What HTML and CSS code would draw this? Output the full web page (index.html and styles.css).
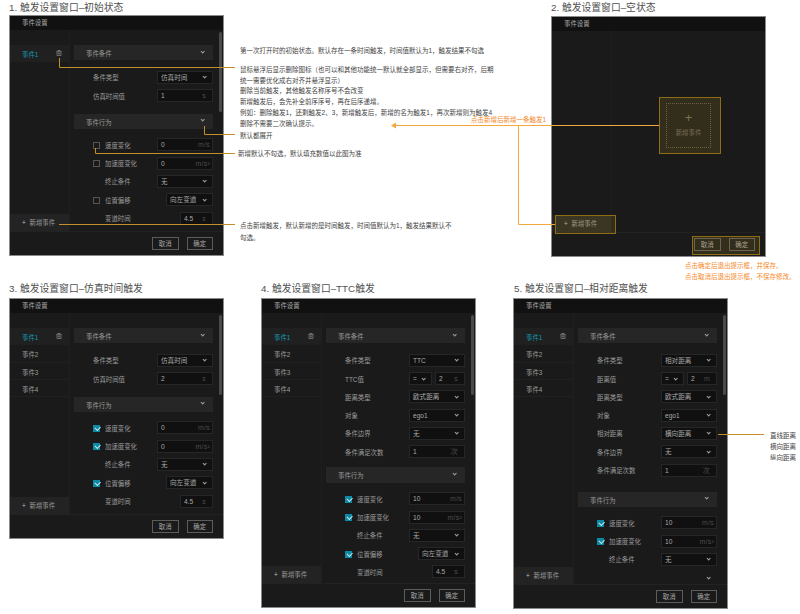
FILE: index.html
```html
<!DOCTYPE html>
<html lang="zh-CN">

<head>
    <meta charset="utf-8">
    <title>触发设置窗口</title>
    <link rel="stylesheet" href="styles.css">
</head>

<body>
    <h2 class="heading heading-1">1. 触发设置窗口–初始状态</h2>
    <h2 class="heading heading-2">2. 触发设置窗口–空状态</h2>
    <h2 class="heading heading-3">3. 触发设置窗口–仿真时间触发</h2>
    <h2 class="heading heading-4">4. 触发设置窗口–TTC触发</h2>
    <h2 class="heading heading-5">5. 触发设置窗口–相对距离触发</h2>

    <!-- 1 初始状态 -->
    <div class="win win-1">
        <div class="win-title">事件设置</div>
        <div class="win-body">
            <div class="side">
                <div class="item active">事件1
                    <svg class="trash" viewBox="0 0 6 6"><path d="M.5 1.3h5M2 1.3V.5h2v.8M1 1.3v4.2h4V1.3M2.4 2.4v2M3.6 2.4v2"/></svg>
                </div>
                <div class="add"><span class="plus">+</span>新增事件</div>
            </div>
            <div class="content">
                <div class="section">事件条件<i class="chev"></i></div>
                <div class="rows">
                    <div class="row"><span class="label">条件类型</span><div class="field">仿真时间<i class="chev"></i></div></div>
                    <div class="row"><span class="label">仿真时间值</span><div class="field">1<span class="unit unit-s">s</span></div></div>
                </div>
                <div class="section section-next">事件行为<i class="chev"></i></div>
                <div class="rows rows-action">
                    <div class="row"><span class="label"><i class="check"></i>速度变化</span><div class="field">0<span class="unit">m/s</span></div></div>
                    <div class="row"><span class="label"><i class="check"></i>加速度变化</span><div class="field">0<span class="unit">m/s²</span></div></div>
                    <div class="row"><span class="label indent">终止条件</span><div class="field">无<i class="chev"></i></div></div>
                    <div class="row"><span class="label"><i class="check"></i>位置偏移</span><div class="field field-mid">向左变道<i class="chev"></i></div></div>
                    <div class="row"><span class="label indent">变道时间</span><div class="field field-small">4.5<span class="unit unit-s">s</span></div></div>
                </div>
            </div>
            <div class="scroll"></div>
        </div>
        <div class="win-foot"><div class="btn">取消</div><div class="btn">确定</div></div>
    </div>

    <!-- 2 空状态 -->
    <div class="win win-2">
        <div class="win-title">事件设置</div>
        <div class="win-body">
            <div class="side side-empty">
                <div class="add"><span class="plus">+</span>新增事件</div>
            </div>
            <div class="content content-empty">
                <div class="empty-box"><span class="empty-plus">+</span>新增事件</div>
            </div>
        </div>
        <div class="win-foot"><div class="btn">取消</div><div class="btn">确定</div></div>
    </div>

    <!-- 3 仿真时间触发 -->
    <div class="win win-3">
        <div class="win-title">事件设置</div>
        <div class="win-body">
            <div class="side">
                <div class="item active">事件1
                    <svg class="trash" viewBox="0 0 6 6"><path d="M.5 1.3h5M2 1.3V.5h2v.8M1 1.3v4.2h4V1.3M2.4 2.4v2M3.6 2.4v2"/></svg>
                </div>
                <div class="item">事件2</div>
                <div class="item">事件3</div>
                <div class="item">事件4</div>
                <div class="add"><span class="plus">+</span>新增事件</div>
            </div>
            <div class="content">
                <div class="section">事件条件<i class="chev"></i></div>
                <div class="rows">
                    <div class="row"><span class="label">条件类型</span><div class="field">仿真时间<i class="chev"></i></div></div>
                    <div class="row"><span class="label">仿真时间值</span><div class="field">2<span class="unit unit-s">s</span></div></div>
                </div>
                <div class="section section-next">事件行为<i class="chev"></i></div>
                <div class="rows rows-action">
                    <div class="row"><span class="label"><i class="check on"></i>速度变化</span><div class="field">0<span class="unit">m/s</span></div></div>
                    <div class="row"><span class="label"><i class="check on"></i>加速度变化</span><div class="field">0<span class="unit">m/s²</span></div></div>
                    <div class="row"><span class="label indent">终止条件</span><div class="field">无<i class="chev"></i></div></div>
                    <div class="row"><span class="label"><i class="check on"></i>位置偏移</span><div class="field field-mid">向左变道<i class="chev"></i></div></div>
                    <div class="row"><span class="label indent">变道时间</span><div class="field field-small">4.5<span class="unit unit-s">s</span></div></div>
                </div>
            </div>
            <div class="scroll"></div>
        </div>
        <div class="win-foot"><div class="btn">取消</div><div class="btn">确定</div></div>
    </div>

    <!-- 4 TTC触发 -->
    <div class="win win-4">
        <div class="win-title">事件设置</div>
        <div class="win-body">
            <div class="side">
                <div class="item active">事件1
                    <svg class="trash" viewBox="0 0 6 6"><path d="M.5 1.3h5M2 1.3V.5h2v.8M1 1.3v4.2h4V1.3M2.4 2.4v2M3.6 2.4v2"/></svg>
                </div>
                <div class="item">事件2</div>
                <div class="item">事件3</div>
                <div class="item">事件4</div>
                <div class="add"><span class="plus">+</span>新增事件</div>
            </div>
            <div class="content">
                <div class="section">事件条件<i class="chev"></i></div>
                <div class="rows">
                    <div class="row"><span class="label">条件类型</span><div class="field">TTC<i class="chev"></i></div></div>
                    <div class="row"><span class="label">TTC值</span>
                        <div class="pair"><div class="field field-op">=<i class="chev"></i></div><div class="field field-val">2<span class="unit unit-s">s</span></div></div>
                    </div>
                    <div class="row"><span class="label">距离类型</span><div class="field">欧式距离<i class="chev"></i></div></div>
                    <div class="row"><span class="label">对象</span><div class="field">ego1<i class="chev"></i></div></div>
                    <div class="row"><span class="label">条件边界</span><div class="field">无<i class="chev"></i></div></div>
                    <div class="row"><span class="label">条件满足次数</span><div class="field">1<span class="unit unit-s">次</span></div></div>
                </div>
                <div class="section section-next section-tight">事件行为<i class="chev"></i></div>
                <div class="rows rows-action">
                    <div class="row"><span class="label"><i class="check on"></i>速度变化</span><div class="field">10<span class="unit">m/s</span></div></div>
                    <div class="row"><span class="label"><i class="check on"></i>加速度变化</span><div class="field">10<span class="unit">m/s²</span></div></div>
                    <div class="row"><span class="label indent">终止条件</span><div class="field">无<i class="chev"></i></div></div>
                    <div class="row"><span class="label"><i class="check on"></i>位置偏移</span><div class="field field-mid">向左变道<i class="chev"></i></div></div>
                    <div class="row"><span class="label indent">变道时间</span><div class="field field-small">4.5<span class="unit unit-s">s</span></div></div>
                </div>
            </div>
            <div class="scroll"></div>
        </div>
        <div class="win-foot"><div class="btn">取消</div><div class="btn">确定</div></div>
    </div>

    <!-- 5 相对距离触发 -->
    <div class="win win-5">
        <div class="win-title">事件设置</div>
        <div class="win-body">
            <div class="side">
                <div class="item active">事件1
                    <svg class="trash" viewBox="0 0 6 6"><path d="M.5 1.3h5M2 1.3V.5h2v.8M1 1.3v4.2h4V1.3M2.4 2.4v2M3.6 2.4v2"/></svg>
                </div>
                <div class="item">事件2</div>
                <div class="item">事件3</div>
                <div class="item">事件4</div>
                <div class="add"><span class="plus">+</span>新增事件</div>
            </div>
            <div class="content">
                <div class="section">事件条件<i class="chev"></i></div>
                <div class="rows">
                    <div class="row"><span class="label">条件类型</span><div class="field">相对距离<i class="chev"></i></div></div>
                    <div class="row"><span class="label">距离值</span>
                        <div class="pair"><div class="field field-op">=<i class="chev"></i></div><div class="field field-val">2<span class="unit unit-s">m</span></div></div>
                    </div>
                    <div class="row"><span class="label">距离类型</span><div class="field">欧式距离<i class="chev"></i></div></div>
                    <div class="row"><span class="label">对象</span><div class="field">ego1<i class="chev"></i></div></div>
                    <div class="row"><span class="label">相对距离</span><div class="field">横向距离<i class="chev"></i></div></div>
                    <div class="row"><span class="label">条件边界</span><div class="field">无<i class="chev"></i></div></div>
                    <div class="row"><span class="label">条件满足次数</span><div class="field">1<span class="unit unit-s">次</span></div></div>
                </div>
                <div class="section section-next section-wide">事件行为<i class="chev"></i></div>
                <div class="rows rows-action">
                    <div class="row"><span class="label"><i class="check on"></i>速度变化</span><div class="field">10<span class="unit">m/s</span></div></div>
                    <div class="row"><span class="label"><i class="check on"></i>加速度变化</span><div class="field">10<span class="unit">m/s²</span></div></div>
                    <div class="row"><span class="label indent">终止条件</span><div class="field">无<i class="chev"></i></div></div>
                    <div class="row"><span class="label"></span><div class="field field-bare"><i class="chev"></i></div></div>
                </div>
            </div>
            <div class="scroll"></div>
        </div>
        <div class="win-foot"><div class="btn">取消</div><div class="btn">确定</div></div>
    </div>

    <!-- 窗口2的高亮框 -->
    <div class="hl hl-empty"></div>
    <div class="hl hl-add"></div>
    <div class="hl hl-foot"></div>

    <!-- 引线 -->
    <svg class="lines" viewBox="0 0 800 614">
        <path class="lead" d="M59.5 58V67.5H235M204.5 126V134.5H235M95.5 148V153.5H235M59 224.5H235M718 434.5H764"/>
        <path class="lead-strong" d="M393 125.5H659M518.5 125.5V224.5H555"/>
        <path class="arrow" d="M391 125.5L396 122.5V128.5Z"/>
    </svg>

    <!-- 说明文字 -->
    <p class="note note-a">第一次打开时的初始状态。默认存在一条时间触发，时间值默认为1，触发结果不勾选</p>
    <div class="note note-b">
        <p>鼠标悬浮后显示删除图标（也可以和其他功能统一默认就全部显示，但需要右对齐，后期</p>
        <p>统一需要优化成右对齐并悬浮显示）</p>
        <p>删除当前触发，其他触发名称序号不会改变</p>
        <p>新增触发后，会先补全前序序号，再在后序递增。</p>
        <p>例如：删除触发1，还剩触发2、3，新增触发后，新增的名为触发1，再次新增则为触发4</p>
        <p>删除不需要二次确认提示。</p>
    </div>
    <p class="note note-c">默认都展开</p>
    <p class="note note-d">新增默认不勾选，默认填充数值以此图为准</p>
    <div class="note note-e">
        <p>点击新增触发，默认新增的是时间触发，时间值默认为1，触发结果默认不</p>
        <p>勾选。</p>
    </div>
    <p class="note orange note-f">点击新增后新增一条触发1</p>
    <div class="note orange note-g">
        <p>点击确定后退出提示框，并保存。</p>
        <p>点击取消后退出提示框，不保存修改。</p>
    </div>
    <div class="note note-h">
        <p>直线距离</p>
        <p>横向距离</p>
        <p>纵向距离</p>
    </div>
</body>

</html>
```

FILE: styles.css
```css
* {
    box-sizing: border-box;
}

body {
    position: relative;
    width: 800px;
    height: 614px;
    margin: 0;
    overflow: hidden;
    background-color: #fff;
    font-family: "Liberation Sans", "Noto Sans CJK SC", sans-serif;
}

p {
    margin: 0;
}

.heading {
    position: absolute;
    margin: 0;
    font-size: 9.8px;
    line-height: 14px;
    font-weight: normal;
    color: #505050;
    white-space: nowrap;
}

.heading-1 { left: 9px; top: 1px; }
.heading-2 { left: 551px; top: 1px; }
.heading-3 { left: 9px; top: 282px; }
.heading-4 { left: 261px; top: 282px; }
.heading-5 { left: 514px; top: 282px; }

/* windows */
.win {
    position: absolute;
    width: 215px;
    display: flex;
    flex-direction: column;
    border: 1px solid #8a8a8a;
    background-color: #1a1a1a;
    color: #9c9c9c;
    font-size: 6.4px;
    overflow: hidden;
}

.win-1 { left: 9px; top: 15px; height: 241px; }
.win-2 { left: 551px; top: 16px; height: 241px; }
.win-3 { left: 9px; top: 298px; height: 241px; }
.win-4 { left: 261px; top: 298px; height: 310px; }
.win-5 { left: 513px; top: 298px; height: 311px; }

.win-title {
    flex: none;
    height: 14px;
    padding-left: 12px;
    line-height: 14.5px;
    background-color: #111;
    color: #b0b0b0;
}

.win-body {
    position: relative;
    flex: 1;
    min-height: 0;
    display: flex;
    overflow: hidden;
}

.win-foot {
    flex: none;
    height: 24px;
    display: flex;
    justify-content: flex-end;
    gap: 8px;
    padding: 5px 10px 0 0;
    border-top: 1px solid #222;
}

.btn {
    width: 26.5px;
    height: 13px;
    border: 1px solid #5c5c5c;
    text-align: center;
    line-height: 11px;
    color: #a8a8a8;
}

/* left list */
.side {
    flex: none;
    width: 60px;
    display: flex;
    flex-direction: column;
    padding-top: 15px;
    border-right: 1px solid #1f1f1f;
}

.item {
    position: relative;
    flex: none;
    height: 17.3px;
    padding-left: 12px;
    line-height: 19px;
    border-bottom: 1px solid #202020;
}

.item.active {
    background-color: #202020;
    color: #1598b0;
}

.trash {
    position: absolute;
    right: 7px;
    top: 5px;
    width: 6px;
    height: 6px;
    fill: none;
    stroke: #9a9a9a;
    stroke-width: .6;
}

.add {
    flex: none;
    height: 17px;
    margin-top: auto;
    padding-left: 12px;
    line-height: 17px;
    background-color: #232323;
}

.plus {
    display: inline-block;
    width: 7.5px;
    color: #bbb;
}

/* right form */
.content {
    flex: 1;
    min-width: 0;
    padding: 15px 10px 0 4px;
}

.section {
    position: relative;
    height: 15.3px;
    padding-left: 12px;
    line-height: 17px;
    background-color: #262626;
}

.section .chev {
    right: 9px;
}

.section-next { margin-top: 11.5px; }
.section-tight { margin-top: 9.2px; }
.section-wide { margin-top: 15px; }

.rows {
    display: flex;
    flex-direction: column;
    gap: 5.3px;
    margin-top: 10.5px;
    padding-left: 19px;
}

.rows-action {
    margin-top: 9.5px;
}

.row {
    display: flex;
    justify-content: space-between;
    align-items: center;
    height: 13px;
}

.label {
    display: flex;
    align-items: center;
    padding-top: 1px;
    white-space: nowrap;
}

.label.indent {
    padding-left: 12px;
}

.check {
    position: relative;
    flex: none;
    width: 7px;
    height: 7px;
    margin-right: 5px;
    border: 1px solid #555;
}

.check.on {
    border-color: #0b8aa5;
    background-color: #0b8aa5;
}

.check.on::after {
    content: "";
    position: absolute;
    left: 0.5px;
    top: 0;
    width: 4px;
    height: 2.5px;
    border-left: 1px solid #d5e8ec;
    border-bottom: 1px solid #d5e8ec;
    transform: rotate(-45deg);
}

.field {
    position: relative;
    flex: none;
    width: 56px;
    height: 13px;
    padding-left: 3px;
    line-height: 12px;
    font-size: 6.6px;
    border: 1px solid #262626;
    background-color: #101010;
    color: #a8a8a8;
}

.field-mid { width: 47px; }
.field-small { width: 33px; padding-left: 3px; }
.field-op { width: 23px; }
.field-val { width: 30px; }

.field-bare {
    border-color: transparent;
    background-color: transparent;
}

.pair {
    display: flex;
    gap: 3px;
}

.unit {
    position: absolute;
    right: 2px;
    top: 0;
    font-size: 7px;
    letter-spacing: .2px;
    color: #4c4c4c;
}

.unit-s {
    right: 6px;
}

.chev {
    position: absolute;
    right: 6px;
    top: 3.5px;
    width: 3.4px;
    height: 3.4px;
    border-right: 1px solid #a0a0a0;
    border-bottom: 1px solid #a0a0a0;
    transform: rotate(45deg);
}

.section .chev {
    top: 4.5px;
}

.scroll {
    position: absolute;
    left: 209px;
    top: 2px;
    width: 3px;
    height: 80px;
    border-radius: 2px;
    background-color: #4a4a4a;
}

/* empty state */
.side-empty {
    width: 60px;
}

.content-empty {
    display: flex;
    justify-content: center;
    align-items: center;
    padding: 0 0 13px 0;
}

.empty-box {
    width: 45px;
    height: 45px;
    display: flex;
    flex-direction: column;
    align-items: center;
    padding-top: 6px;
    border: 1px dotted #5f5b46;
    color: #6c6b5e;
}

.empty-plus {
    font-size: 13px;
    line-height: 15px;
    margin-bottom: 3px;
    font-weight: normal;
}

/* highlight frames sitting on window 2 */
.hl {
    position: absolute;
    border: 1px solid #8f6d12;
    background-color: rgba(180, 140, 40, .17);
}

.hl-empty { left: 659px; top: 97px; width: 62px; height: 57px; }
.hl-add { left: 555px; top: 215px; width: 61px; height: 19px; }
.hl-foot { left: 692px; top: 236px; width: 68px; height: 19px; }

/* leader lines */
.lines {
    position: absolute;
    left: 0;
    top: 0;
    width: 800px;
    height: 614px;
    pointer-events: none;
}

.lead {
    fill: none;
    stroke: #c48f2a;
    stroke-width: 1;
}

.lead-strong {
    fill: none;
    stroke: #f2aa3c;
    stroke-width: 1;
}

.arrow {
    fill: #f2aa3c;
}

/* notes */
.note {
    position: absolute;
    font-size: 6.5px;
    line-height: 10.7px;
    color: #444;
    white-space: nowrap;
}

.note-a { left: 240px; top: 46px; }
.note-b { left: 240px; top: 65px; }
.note-c { left: 240px; top: 131px; }
.note-d { left: 238px; top: 149px; }
.note-e { left: 240px; top: 220px; line-height: 11.7px; }
.note-f { left: 471px; top: 115px; }
.note-g { left: 685px; top: 261px; }
.note-h { left: 770px; top: 430px; line-height: 11.2px; }

.orange {
    color: #f5881f;
}
```
